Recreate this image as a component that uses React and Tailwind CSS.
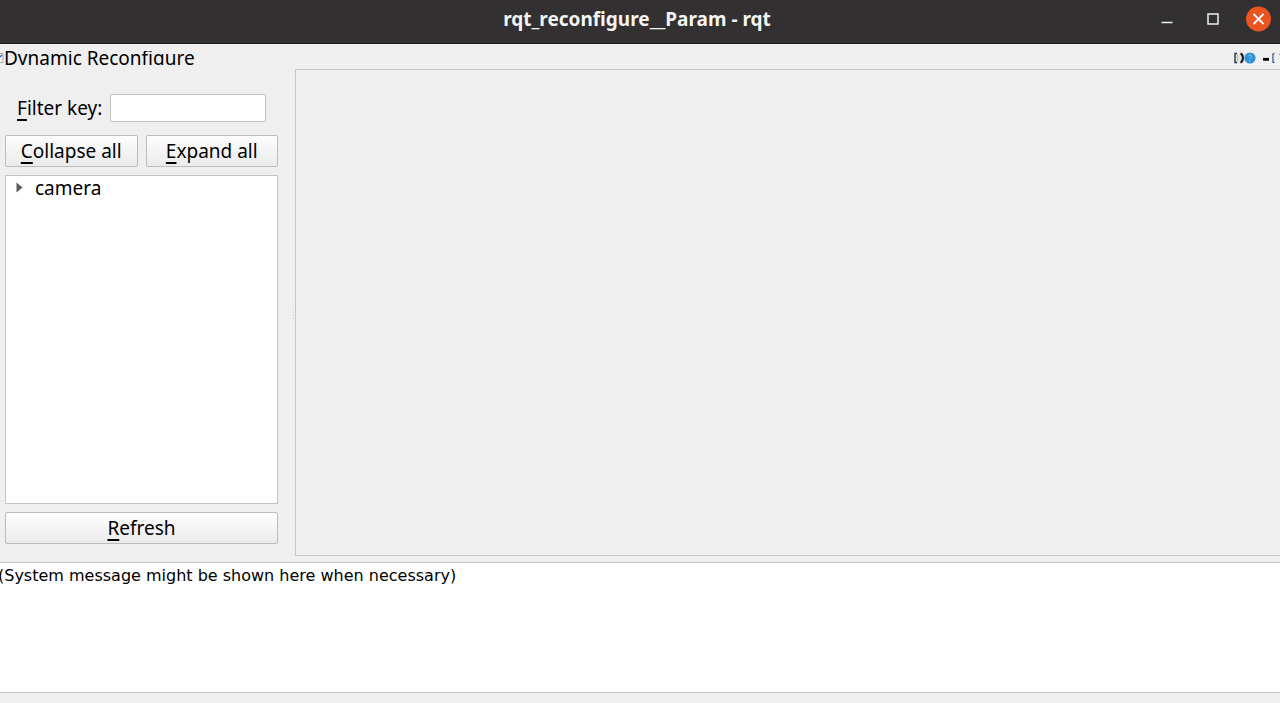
import React, { useState } from 'react';

const BUTTON =
  'h-8 rounded-xs border border-[#bcbcbc] bg-linear-to-b from-[#fdfdfd] to-[#ebebeb] text-[19px] leading-6 text-black';

// Label with its mnemonic letter underlined
function Mnemonic({ text }) {
  return (
    <>
      <span className="underline decoration-2 underline-offset-4">{text[0]}</span>
      {text.slice(1)}
    </>
  );
}

function TitleBar() {
  return (
    <header className="relative flex h-11 shrink-0 items-center justify-end border-b border-[#1c1b1b] bg-[#323031] pb-1.5">
      <h1 className="absolute inset-x-0 pr-1.5 text-center text-[19px] leading-6 font-bold text-[#f4f4f4]">
        rqt_reconfigure__Param - rqt
      </h1>
      <div className="relative flex items-center gap-5 pr-2">
        <button aria-label="Minimize" className="size-6.5">
          <svg viewBox="0 0 26 26" className="size-full">
            <path d="M7.5 16.5h11" stroke="#f0f0f0" strokeWidth="1.5" />
          </svg>
        </button>
        <button aria-label="Maximize" className="size-6.5">
          <svg viewBox="0 0 26 26" className="size-full" fill="none">
            <rect x="8" y="8" width="10" height="10" stroke="#f0f0f0" strokeWidth="1.5" />
          </svg>
        </button>
        <button aria-label="Close" className="size-6.5">
          <svg viewBox="0 0 26 26" className="size-full">
            <circle cx="12.5" cy="13" r="12.5" fill="#e95420" />
            <path d="M7.5 8l10 10M17.5 8L7.5 18" stroke="#fff" strokeWidth="1.8" />
          </svg>
        </button>
      </div>
    </header>
  );
}

function DockHeader() {
  return (
    <div className="flex h-6 shrink-0 items-center justify-between pt-1">
      <div className="flex h-3.5 items-center overflow-hidden">
        <svg viewBox="0 0 4 12" className="h-3 w-1">
          <path d="M0 1.5h3v9H0" fill="#f4f4f4" stroke="#a9a9a9" />
          <path d="M0 5l2-2" stroke="#2a62d8" strokeWidth="1.5" />
        </svg>
        <h2 className="text-[19px] leading-5">Dynamic Reconfigure</h2>
      </div>
      <div className="flex items-center">
        <button aria-label="Reload plugin" className="h-3 w-2.5">
          <svg viewBox="0 0 10 12" className="size-full" fill="none">
            <rect x="1" y="1.5" width="7" height="9" fill="#e6e4e1" />
            <path d="M3 1.5H1v9h2" stroke="#26324a" strokeWidth="1.4" />
            <path d="M3.5 2.5v7" stroke="#a5c0dd" />
            <path d="M6.5 1.5c3.2 1 3.2 8 0 9" stroke="#17110d" strokeWidth="2" />
          </svg>
        </button>
        <button aria-label="Help" className="h-3 w-3">
          <svg viewBox="0 0 12 12" className="size-full" fill="none">
            <circle cx="6" cy="6" r="5.6" fill="#2d91dc" />
            <path d="M4.3 4.3c.4-2 3.6-1.6 3.3.2-.2 1.2-1.6 1.2-1.6 2.6M6 8.3v1.2" stroke="#9fd0f5" strokeWidth="1" />
          </svg>
        </button>
        <button aria-label="Float or close dock" className="ml-1 h-3 w-5">
          <svg viewBox="0 0 20 12" className="size-full" fill="none">
            <path d="M3 7.3h6" stroke="#000" strokeWidth="2.8" />
            <path d="M14.5 1.5c-2 0-1.5 1-1.5 2v5c0 1-.5 2 1.5 2" stroke="#233d63" strokeWidth="1.2" />
            <path d="M14 3v6" stroke="#a9d2f5" />
            <path d="M19 2.2h1" stroke="#b98d6c" />
          </svg>
        </button>
      </div>
    </div>
  );
}

function Sidebar() {
  const [filter, setFilter] = useState('');
  const [expanded, setExpanded] = useState(false);

  return (
    <aside className="flex w-[278px] shrink-0 flex-col gap-2 pb-3 pl-[5px]">
      <div className="flex items-center gap-2 pt-[26px] pr-3 pb-[5px] pl-3">
        <label htmlFor="filter-key" className="shrink-0 text-[19px] leading-6">
          <Mnemonic text="Filter key:" />
        </label>
        <input
          id="filter-key"
          type="text"
          value={filter}
          onChange={e => setFilter(e.target.value)}
          className="h-7 min-w-0 flex-1 rounded-xs border border-[#c1c1c1] bg-white px-1 text-[19px] outline-none"
        />
      </div>
      <div className="grid grid-cols-2 gap-2">
        <button className={BUTTON} onClick={() => setExpanded(false)}>
          <Mnemonic text="Collapse all" />
        </button>
        <button className={BUTTON} onClick={() => setExpanded(true)}>
          <Mnemonic text="Expand all" />
        </button>
      </div>
      <ul role="tree" aria-label="Nodes" className="flex-1 border border-[#c3c3c3] bg-white">
        <li role="treeitem" aria-expanded={expanded}>
          <button
            className="flex w-full items-center gap-3 pl-2.5 text-left text-[19px] leading-6"
            onClick={() => setExpanded(!expanded)}
          >
            <svg viewBox="0 0 7 12" className="h-3 w-[7px]">
              <path d="M0.5 0.5l6 5-6 5z" fill="#5c5c5c" />
            </svg>
            camera
          </button>
        </li>
      </ul>
      <button className={BUTTON}>
        <Mnemonic text="Refresh" />
      </button>
    </aside>
  );
}

export default function App() {
  return (
    <div className="flex h-screen flex-col overflow-hidden bg-[#efefef] font-['Noto_Sans','Open_Sans',sans-serif] text-black">
      <TitleBar />
      <DockHeader />
      <main className="flex min-h-0 flex-1">
        <Sidebar />
        {/* splitter handle */}
        <div className="flex w-[17px] shrink-0 flex-col items-end justify-center gap-0.5 pr-px">
          {[0, 1, 2, 3, 4].map(i => (
            <span key={i} className="size-px bg-[#d4d4d4]" />
          ))}
        </div>
        <section aria-label="Parameters" className="mt-px flex-1 border-y border-l border-[#c6c6c6]" />
      </main>
      <div className="mt-1.5 flex h-[131px] shrink-0 border-y border-[#c6c6c6] bg-white">
        <textarea
          readOnly
          aria-label="System messages"
          className="-ml-1 flex-1 resize-none px-0.5 pt-[3px] font-['DejaVu_Sans',sans-serif] text-base leading-5 outline-none"
          defaultValue="(System message might be shown here when necessary)"
        />
      </div>
      <footer className="h-2.5 shrink-0" />
    </div>
  );
}
